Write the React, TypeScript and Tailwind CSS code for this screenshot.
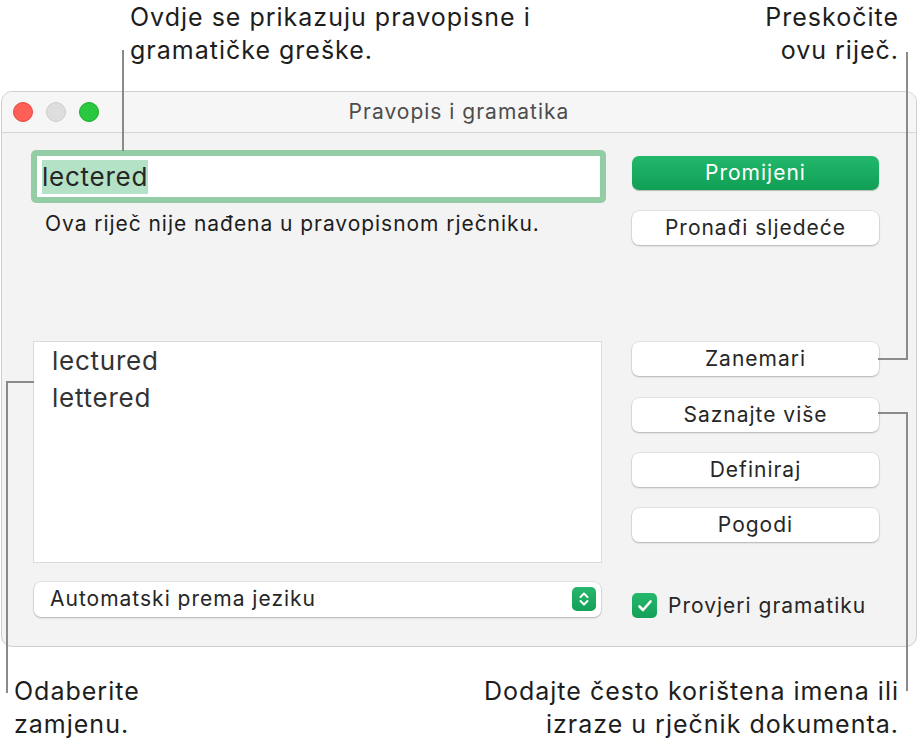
import React from 'react';

const font = { fontFamily: 'Inter, "Noto Sans", "Liberation Sans", sans-serif' };

function Btn({ label, primary }: { label: string; primary?: boolean }) {
  if (primary) {
    return (
      <div className="h-[34px] w-[247px] rounded-[7px] bg-gradient-to-b from-[#22b86c] to-[#0f9f55] shadow-[0_1px_1px_rgba(0,0,0,0.25)] flex items-center justify-center text-[21px] tracking-[1px] text-white">
        {label}
      </div>
    );
  }
  return (
    <div className="h-[34px] w-[247px] rounded-[7px] bg-white shadow-[0_0_0_0.5px_rgba(0,0,0,0.12),0_1px_2px_rgba(0,0,0,0.22)] flex items-center justify-center text-[21px] tracking-[1px] text-[#262626]">
      {label}
    </div>
  );
}

export default function App() {
  return (
    <div className="relative w-[918px] h-[753px] bg-white overflow-hidden text-[#1d1d1d]" style={font}>
      {/* top callouts */}
      <div className="h-[91px] flex justify-between">
        <div className="pl-[130px] pt-[1px] text-[25px] tracking-[1px] leading-[33px]">
          <div>Ovdje se prikazuju pravopisne i</div>
          <div>gramatičke greške.</div>
        </div>
        <div className="pr-[19px] pt-[1px] text-[25px] tracking-[1px] leading-[33px] text-right">
          <div>Preskočite</div>
          <div>ovu riječ.</div>
        </div>
      </div>

      {/* window */}
      <div className="ml-[1px] w-[916px] h-[556px] rounded-[11px] border border-[#cfcfcf] bg-[#f3f3f3] overflow-hidden">
        <div className="relative h-[41px] bg-[#f6f6f6] border-b border-[#d6d6d6] flex items-center justify-center">
          <div className="absolute left-[11px] top-[10px] flex gap-[13px]">
            <span className="w-[20px] h-[20px] rounded-full bg-[#fe5f57] border border-[#e2463f]" />
            <span className="w-[20px] h-[20px] rounded-full bg-[#dedede] border border-[#cdcdcd]" />
            <span className="w-[20px] h-[20px] rounded-full bg-[#28c840] border border-[#1aab29]" />
          </div>
          <div className="text-[21px] tracking-[1px] text-[#4d4d4d] -mt-[1px]">Pravopis i gramatika</div>
        </div>

        <div className="flex pl-[29px]">
          {/* left column */}
          <div className="w-[575px] flex flex-col">
            <div className="mt-[17px] h-[53px] rounded-[5px] bg-[#93cca5] p-[6px]">
              <div className="h-full bg-white flex items-center pl-[5px]">
                <span className="bg-[#b4e2c7] text-[26px] tracking-[0.75px] leading-[34px] text-[#262626]">lectered</span>
              </div>
            </div>
            <div className="mt-[5px] pl-[14px] text-[21px] tracking-[0.95px] text-[#1d1d1d]">
              Ova riječ nije nađena u pravopisnom rječniku.
            </div>
            <div className="mt-[101px] ml-[2px] w-[569px] h-[222px] bg-white border border-[#dadada] pl-[18px] text-[26px] tracking-[0.75px] leading-[37px] text-[#333]">
              <div>lectured</div>
              <div>lettered</div>
            </div>
            <div className="mt-[19px] ml-[3px] w-[567px] h-[35px] rounded-[7px] bg-white shadow-[0_0_0_0.5px_rgba(0,0,0,0.12),0_1px_2px_rgba(0,0,0,0.22)] flex items-center justify-between pl-[16px] pr-[5px]">
              <span className="text-[21px] tracking-[1px] text-[#262626]">Automatski prema jeziku</span>
              <span className="w-[24px] h-[24px] rounded-[5px] bg-gradient-to-b from-[#25b86c] to-[#13a058] flex items-center justify-center">
                <svg width="12" height="16" viewBox="0 0 12 16" fill="none" stroke="white" strokeWidth="2" strokeLinecap="round" strokeLinejoin="round">
                  <path d="M2.5 6 L6 2.5 L9.5 6" />
                  <path d="M2.5 10 L6 13.5 L9.5 10" />
                </svg>
              </span>
            </div>
          </div>

          {/* right column */}
          <div className="ml-[26px] flex flex-col">
            <div className="mt-[23px]"><Btn label="Promijeni" primary /></div>
            <div className="mt-[21px]"><Btn label="Pronađi sljedeće" /></div>
            <div className="mt-[97px]"><Btn label="Zanemari" /></div>
            <div className="mt-[22px]"><Btn label="Saznajte više" /></div>
            <div className="mt-[21px]"><Btn label="Definiraj" /></div>
            <div className="mt-[21px]"><Btn label="Pogodi" /></div>
            <div className="mt-[48px] flex items-center gap-[11px]">
              <span className="w-[25px] h-[25px] rounded-[5px] bg-gradient-to-b from-[#25b86c] to-[#13a058] flex items-center justify-center">
                <svg width="16" height="14" viewBox="0 0 16 14" fill="none" stroke="white" strokeWidth="2.6" strokeLinecap="round" strokeLinejoin="round">
                  <path d="M2.5 7.5 L6 11 L13.5 2.5" />
                </svg>
              </span>
              <span className="text-[21px] tracking-[1px] text-[#262626]">Provjeri gramatiku</span>
            </div>
          </div>
        </div>
      </div>

      {/* bottom callouts */}
      <div className="flex justify-between pt-[28px]">
        <div className="pl-[14px] text-[25px] tracking-[1px] leading-[33px]">
          <div>Odaberite</div>
          <div>zamjenu.</div>
        </div>
        <div className="pr-[19px] text-[25px] tracking-[1px] leading-[33px] text-right">
          <div>Dodajte često korištena imena ili</div>
          <div>izraze u rječnik dokumenta.</div>
        </div>
      </div>

      {/* leader lines */}
      <div className="absolute left-[122px] top-[50px] w-[2px] h-[101px] bg-[#8a8a8a]" />
      <div className="absolute left-[906px] top-[52px] w-[2px] h-[308px] bg-[#8a8a8a]" />
      <div className="absolute left-[878px] top-[358px] w-[30px] h-[2px] bg-[#8a8a8a]" />
      <div className="absolute left-[878px] top-[412px] w-[30px] h-[2px] bg-[#8a8a8a]" />
      <div className="absolute left-[906px] top-[412px] w-[2px] h-[279px] bg-[#8a8a8a]" />
      <div className="absolute left-[6px] top-[381px] w-[28px] h-[2px] bg-[#8a8a8a]" />
      <div className="absolute left-[6px] top-[381px] w-[2px] h-[312px] bg-[#8a8a8a]" />
    </div>
  );
}
